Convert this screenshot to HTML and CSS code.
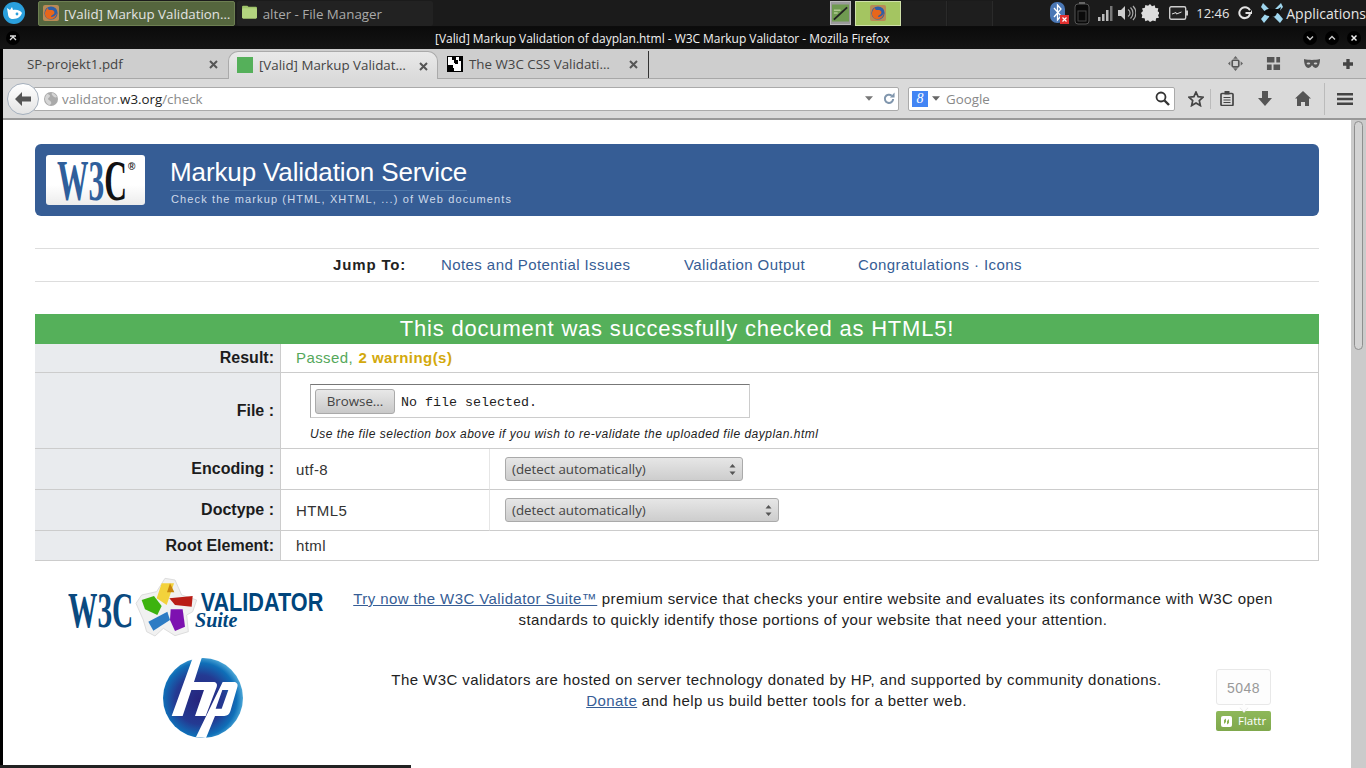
FILE: index.html
```html
<!DOCTYPE html>
<html lang="en">
<head>
<meta charset="utf-8">
<title>[Valid] Markup Validation of dayplan.html - W3C Markup Validator</title>
<link rel="stylesheet" href="styles.css">
</head>
<body>
<div class="panel">
  <svg class="panel-logo" viewBox="0 0 22 22"><circle cx="11" cy="11" r="11" fill="#2a9fdc"/><path d="M4 6l3 2 2-3 1 3c4-1 8 1 9 3-1 3-4 6-9 6-3 0-5-2-5-5z" fill="#fff"/><circle cx="14" cy="12" r="1.4" fill="#2a9fdc"/></svg>
  <div class="task task-active">
    <svg class="ff-icon" viewBox="0 0 16 16"><rect width="16" height="16" rx="2" fill="#b98a55"/><circle cx="8" cy="8" r="6.6" fill="#2d5fa8"/><path d="M3 12c-2-3-1-7 2-9 0 2 1 2 3 2 3 0 4 2 3 4-1 1-3 1-3 3 2 0 4-1 6-4-1 4-3 6-6 6-2 0-4 0-5-2z" fill="#e8661c"/></svg>
    <span class="task-text">[Valid] Markup Validation…</span>
  </div>
  <div class="task">
    <svg class="folder-icon" viewBox="0 0 16 16"><path d="M1 3.5a1 1 0 011-1h4l1 1h7a1 1 0 011 1v9a1 1 0 01-1 1H2a1 1 0 01-1-1z" fill="#9fc46a"/><rect x="1" y="5" width="14" height="9.5" rx="1" fill="#b3d47f"/></svg>
    <span class="task-text task-dim">alter - File Manager</span>
  </div>
  <div class="pager">
    <div class="pager-thumb"><svg viewBox="0 0 18 18"><rect width="18" height="18" fill="#6f9a50"/><path d="M2 16L16 3" stroke="#222" stroke-width="2"/><path d="M2 6h7M2 9h4" stroke="#d8e8b8"/></svg></div>
    <div class="pager-active"><svg class="ff-icon" viewBox="0 0 16 16"><rect width="16" height="16" rx="2" fill="#b98a55"/><circle cx="8" cy="8" r="6.6" fill="#2d5fa8"/><path d="M3 12c-2-3-1-7 2-9 0 2 1 2 3 2 3 0 4 2 3 4-1 1-3 1-3 3 2 0 4-1 6-4-1 4-3 6-6 6-2 0-4 0-5-2z" fill="#e8661c"/></svg></div>
    <div class="pager-slot"></div>
    <div class="pager-slot"></div>
  </div>
  <div class="tray">
    <svg class="t-bt" viewBox="0 0 19 22"><rect x="0" y="0" width="15" height="21" rx="7" fill="#4a77b5"/><path d="M4 6l7 8-3.5 4V3L11 7l-7 8" fill="none" stroke="#fff" stroke-width="1.3"/><rect x="10" y="13" width="9" height="9" fill="#e03030"/><path d="M12.5 15.5l4 4m0-4l-4 4" stroke="#fff" stroke-width="1.2"/></svg>
    <svg class="t-batt" viewBox="0 0 16 23"><rect x="1" y="2" width="14" height="20" rx="3" fill="#0a0a0a" stroke="#555"/><rect x="5" y="0" width="6" height="2" fill="#666"/><rect x="4" y="9" width="8" height="10" fill="none" stroke="#444"/></svg>
    <svg class="t-sig" viewBox="0 0 15 15"><rect x="0" y="11" width="2.5" height="4" fill="#bbb"/><rect x="4" y="8" width="2.5" height="7" fill="#bbb"/><rect x="8" y="4" width="2.5" height="11" fill="#bbb"/><rect x="12" y="0" width="2.5" height="15" fill="#777"/></svg>
    <svg class="t-vol" viewBox="0 0 18 16"><path d="M0 5h3l4-4v14l-4-4H0z" fill="#ccc"/><path d="M10 4.5a4 4 0 010 7M12.5 2.500a7.500 7.500 0 010 11M15 1a10 10 0 010 14" fill="none" stroke="#aaa" stroke-width="1.200"/></svg>
    <svg class="t-gear" viewBox="0 0 18 18"><path d="M9 0l2 2.200 2.700-1 .7 2.800 2.900.3-.6 2.900 2.300 1.800L17 11l1 2.700-2.900.6-.5 2.900-2.800-.6L9 18l-2-1.800-2.700 1-.7-2.900-2.900-.3.600-2.800L0 9l2-1.900L1 4.400l2.900-.6.400-2.900 2.800.8z" fill="#ddd"/></svg>
    <svg class="t-power" viewBox="0 0 19 14"><rect x=".7" y=".7" width="16" height="12.600" rx="1.500" fill="#222" stroke="#ccc" stroke-width="1.400"/><rect x="17" y="4.500" width="2" height="5" fill="#ccc"/><path d="M3 8l4-1.500.5 1.500 5-2" stroke="#ddd" fill="none"/></svg>
    <span class="clock">12:46</span>
    <svg class="t-exit" viewBox="0 0 14 14"><path d="M12 4.200A5.500 5.500 0 102 9.500a5.500 5.500 0 0010-1.500" fill="none" stroke="#e4e4e4" stroke-width="2"/><path d="M7.500 7H14V4.500" fill="none" stroke="#e4e4e4" stroke-width="1.800"/></svg>
    <svg class="t-xfce" viewBox="0 0 22 22"><path d="M2 1l6 6h6l6-6 2 4-5 6 5 6-3 4-6-6H8l-5 6-3-4 5-6-5-6z" fill="#9fd6ee"/><path d="M2 10c3-3 7-4 9-3h6l3-2-1 4 1 3-4-1c-1 3-3 4-5 4l-2 2-1-3c-2 0-4-1-6-4z" fill="#0e0e0e"/></svg>
    <span class="apps">Applications</span>
  </div>
</div>

<div class="window">
  <div class="titlebar">
    <span class="wbtn wbtn-menu"><svg viewBox="0 0 10 10"><path d="M2 3h6M2 7l3-3 3 3" fill="none" stroke="#ddd" stroke-width="1.300"/></svg></span>
    <span class="title">[Valid] Markup Validation of dayplan.html - W3C Markup Validator - Mozilla Firefox</span>
    <div class="wbtns">
      <span class="wbtn"><svg viewBox="0 0 10 10"><path d="M2 3.500l3 3 3-3" fill="none" stroke="#ccc" stroke-width="1.400"/></svg></span>
      <span class="wbtn"><svg viewBox="0 0 10 10"><path d="M2 6.500l3-3 3 3" fill="none" stroke="#ccc" stroke-width="1.400"/></svg></span>
      <span class="wbtn"><svg viewBox="0 0 10 10"><path d="M2.500 2.500l5 5m0-5l-5 5" fill="none" stroke="#eee" stroke-width="1.500"/></svg></span>
    </div>
  </div>

  <div class="tabbar">
    <div class="tab tab-first"><span class="tab-label">SP-projekt1.pdf</span><svg class="tab-x" viewBox="0 0 9 9"><path d="M1 1l7 7m0-7L1 8" stroke="#555" stroke-width="2"/></svg></div>
    <div class="tab tab-current"><span class="fav fav-green"></span><span class="tab-label">[Valid] Markup Validat…</span><svg class="tab-x" viewBox="0 0 9 9"><path d="M1 1l7 7m0-7L1 8" stroke="#555" stroke-width="2"/></svg></div>
    <div class="tab tab-third">
      <svg class="fav" viewBox="0 0 16 16"><rect width="16" height="16" fill="#000"/><path d="M1 1h4v3h2v3h4V4h-2V1h3v4h2v10h-7v-3H6V9H1z" fill="#fff"/><rect x="8" y="5" width="3" height="3" fill="#000"/><rect x="3" y="10" width="3" height="5" fill="#000"/></svg>
      <span class="tab-label">The W3C CSS Validati…</span><svg class="tab-x" viewBox="0 0 9 9"><path d="M1 1l7 7m0-7L1 8" stroke="#555" stroke-width="2"/></svg>
    </div>
    <div class="tabtools">
      <svg viewBox="0 0 16 16"><path d="M8 0l2.500 3h-5zM8 16l-2.500-3h5zM0 8l2.500-2.500v5zM16 8l-2.500 2.500v-5z" fill="#666"/><rect x="4.500" y="4.500" width="7" height="7" rx="1" fill="none" stroke="#555" stroke-width="1.800"/></svg>
      <svg viewBox="0 0 16 16"><path d="M1 1h8v6H1zM11 1h4v6h-4zM1 9h5v6H1zM8 9h7v6H8z" fill="#555"/></svg>
      <svg viewBox="0 0 18 12"><path d="M0 1c3 1 6 1 9 1s6 0 9-1c0 6-2 10-5 10-2 0-3-2-4-3-1 1-2 3-4 3C2 11 0 7 0 1z" fill="#555"/><ellipse cx="5" cy="6" rx="2" ry="1.200" fill="#ccc"/><ellipse cx="13" cy="6" rx="2" ry="1.200" fill="#ccc"/></svg>
      <svg viewBox="0 0 12 12"><path d="M4 0h4v4h4v4H8v4H4V8H0V4h4z" fill="#444"/></svg>
    </div>
  </div>

  <div class="navbar">
    <div class="backbtn"><svg viewBox="0 0 16 14"><path d="M7 0L0 7l7 7V9.500h9v-5H7z" fill="#555"/></svg></div>
    <div class="urlbar">
      <svg class="globe" viewBox="0 0 14 14"><circle cx="7" cy="7" r="7" fill="#aaa"/><path d="M3 2c2 0 3 1 3 2S4 6 4 7s2 1 3 3-1 3-2 3C3 12 1 9 1 7s1-4 2-5zM8 1c2 0 4 2 5 4-2 1-3 0-4-1S7 2 8 1z" fill="#d5d5d5"/></svg>
      <span class="url"><span class="url-dim">validator.</span><span class="url-host">w3.org</span><span class="url-dim">/check</span></span>
      <svg class="drop" viewBox="0 0 9 5"><path d="M0 0h9L4.500 5z" fill="#777"/></svg>
      <svg class="reload" viewBox="0 0 13 13"><path d="M11 7a4.500 4.500 0 11-1.500-3.500" fill="none" stroke="#8096ad" stroke-width="2.200"/><path d="M7.500 5.500H12.500V0z" fill="#8096ad"/></svg>
    </div>
    <div class="searchbar">
      <span class="gicon">8</span>
      <svg class="drop drop-g" viewBox="0 0 9 5"><path d="M0 0h9L4.500 5z" fill="#666"/></svg>
      <span class="search-text">Google</span>
      <svg class="mag" viewBox="0 0 15 15"><circle cx="6" cy="6" r="4.500" fill="none" stroke="#333" stroke-width="1.800"/><path d="M9.500 9.500l4.500 4.500" stroke="#333" stroke-width="2.400"/></svg>
    </div>
    <div class="navtools">
      <svg class="nt-star" viewBox="0 0 16 16"><path d="M8 1l2.100 4.700 5 .5-3.800 3.400 1.100 5L8 12l-4.400 2.600 1.100-5L.9 6.200l5-.5z" fill="none" stroke="#444" stroke-width="1.700"/></svg>
      <span class="nt-sep nt-sep-a"></span>
      <svg class="nt-list" viewBox="0 0 14 15"><rect x="1" y="2.500" width="12" height="12" rx="1" fill="none" stroke="#444" stroke-width="1.700"/><rect x="4.500" y="0" width="5" height="3.500" fill="#444"/><path d="M3.500 6.500h7M3.500 9h7M3.500 11.500h7" stroke="#444" stroke-width="1.200"/></svg>
      <svg class="nt-down" viewBox="0 0 14 15"><path d="M4 0h6v7h4l-7 8-7-8h4z" fill="#555"/></svg>
      <svg class="nt-home" viewBox="0 0 16 15"><path d="M8 0l8 7.500h-2V15h-4v-4H6v4H2V7.500H0z" fill="#555"/></svg>
      <span class="nt-sep nt-sep-b"></span>
      <svg class="nt-menu" viewBox="0 0 16 12"><path d="M0 0h16v2.500H0zM0 4.700h16v2.500H0zM0 9.500h16V12H0z" fill="#444"/></svg>
    </div>
  </div>

  <main class="page">
    <header class="banner">
      <div class="w3c-box">
        <svg viewBox="0 0 99 50" class="w3c-svg"><text x="11" y="45" class="w3c-letters" textLength="70" lengthAdjust="spacingAndGlyphs"><tspan fill="#2f5f9c">W3</tspan><tspan fill="#111">C</tspan></text><text x="82" y="15" class="w3c-reg">®</text></svg>
      </div>
      <div class="banner-text">
        <h1 class="banner-title">Markup Validation Service</h1>
        <p class="banner-sub">Check the markup (HTML, XHTML, ...) of Web documents</p>
      </div>
    </header>

    <nav class="jump">
      <strong class="jump-label">Jump To:</strong>
      <a class="jump-link jl1">Notes and Potential Issues</a>
      <a class="jump-link jl2">Validation Output</a>
      <a class="jump-link jl3">Congratulations · Icons</a>
    </nav>

    <h2 class="status">This document was successfully checked as HTML5!</h2>

    <section class="results">
      <div class="th r-result">Result:</div>
      <div class="td td-wide r-result"><span class="passed">Passed,</span>&nbsp;<strong class="warn">2 warning(s)</strong></div>

      <div class="th r-file">File :</div>
      <div class="td td-wide td-file r-file">
        <div class="filebox"><span class="browse">Browse...</span><span class="nofile">No file selected.</span></div>
        <p class="filenote">Use the file selection box above if you wish to re-validate the uploaded file dayplan.html</p>
      </div>

      <div class="th r-sel">Encoding :</div>
      <div class="td td-val r-sel">utf-8</div>
      <div class="td td-select r-sel"><span class="select sel-a">(detect automatically)<svg viewBox="0 0 7 11"><path d="M3.500 0L6.500 3.500h-6zM3.500 11L.5 7.500h6z" fill="#555"/></svg></span></div>

      <div class="th r-sel">Doctype :</div>
      <div class="td td-val r-sel">HTML5</div>
      <div class="td td-select r-sel"><span class="select sel-b">(detect automatically)<svg viewBox="0 0 7 11"><path d="M3.500 0L6.500 3.500h-6zM3.500 11L.5 7.500h6z" fill="#555"/></svg></span></div>

      <div class="th r-root">Root Element:</div>
      <div class="td td-wide r-root">html</div>
    </section>

    <section class="promo">
      <svg class="suite-logo" viewBox="54 21 768 183">
        <text x="54" y="170" class="s-w3c" textLength="196" lengthAdjust="spacingAndGlyphs">W3C</text>
        <path d="M345 25l30 5 20 45 45 15-12 35-18 10 5 50-40 12-35-22-25 23-25-13-10-35-22-50 17-25 45-10z" fill="#f1f1f1" stroke="#ddd" stroke-width="3"/>
        <path d="M335 40h37l-22 65-30-20z" fill="#f3d23c"/>
        <path d="M360 40l13 27h-22z" fill="#c8860c"/>
        <path d="M358 85l70-7-3 32-50-5z" fill="#b91d16"/>
        <path d="M362 118h36l7 52-30 13-15-33z" fill="#7d11b0"/>
        <path d="M295 155l57-30 8 25-50 32z" fill="#2d7cc4"/>
        <path d="M275 90l37-12 23 30-13 27-37-17z" fill="#3db30e"/>
        <text x="452" y="122" class="s-val" textLength="368" lengthAdjust="spacingAndGlyphs">VALIDATOR</text>
        <text x="435" y="172" class="s-suite" textLength="127" lengthAdjust="spacingAndGlyphs">Suite</text>
      </svg>
      <p class="promo-text"><a class="ul">Try now the W3C Validator Suite™</a> premium service that checks your entire website and evaluates its conformance with W3C open standards to quickly identify those portions of your website that need your attention.</p>
    </section>

    <section class="sponsor">
      <svg class="hp-logo" viewBox="0 0 240 240">
        <defs>
          <radialGradient id="hpg" cx="0.46" cy="0.52" r="0.56"><stop offset="0" stop-color="#26237c"/><stop offset="0.55" stop-color="#243a92"/><stop offset="0.82" stop-color="#0f6fb8"/><stop offset="1" stop-color="#5ab4de"/></radialGradient>
        </defs>
        <circle cx="120" cy="120" r="120" fill="url(#hpg)"/>
        <path d="M89 0h27L93 72h57c10 0 14 6 11 15L128 174H96l27-78H85L59 174H26z" fill="#fff"/>
        <path fill-rule="evenodd" d="M179 72h32c10 0 15 6 12 15l-21 73c-3 9-9 14-18 14h-28l-27 66-30-3zM178 96l-20 56h18l20-56z" fill="#fff"/>
      </svg>
      <p class="sponsor-text">The W3C validators are hosted on server technology donated by HP, and supported by community donations.<br><a class="ul">Donate</a> and help us build better tools for a better web.</p>
      <div class="flattr">
        <div class="flattr-count">5048</div>
        <div class="flattr-btn"><svg viewBox="0 0 11 11"><rect width="11" height="11" rx="2" fill="#fff"/><path d="M3 8V4l2-1.500V6zM8 3v4L6 8.500V5z" fill="#8ab353"/></svg>Flattr</div>
      </div>
    </section>
  </main>
</div>
<div class="statusbar"></div>

<div class="scrollbar"><div class="scrollthumb"></div></div>
</body>
</html>
```

FILE: styles.css
```css
* { box-sizing: border-box; }
html, body { margin: 0; padding: 0; }
body {
  width: 1366px; height: 768px; overflow: hidden; position: relative;
  display: flex; flex-direction: column;
  font-family: "Open Sans", sans-serif; background: #fff;
}
svg { display: block; flex: none; }

/* desktop panel */
.panel { height: 27px; flex: none; background: #1b1b1b; display: flex; align-items: center; padding-left: 3px; border-bottom: 1px solid #0c0c0c; }
.panel-logo { width: 22px; height: 22px; margin-right: 13px; }
.task { width: 198px; height: 25px; margin-right: 2px; display: flex; align-items: center; padding-left: 4px; gap: 5px; background: #222; border-radius: 2px; }
.task-active { background: #55663e; border: 1px solid #6d7f52; }
.ff-icon { width: 16px; height: 16px; }
.folder-icon { width: 17px; height: 17px; margin-top: -4px; }
.task-text { font-size: 13.33px; color: #e3e3e3; white-space: nowrap; padding-top: 2px; }
.task-dim { color: #aaa; margin-left: 0; }
.pager { display: flex; margin-left: 395px; height: 25px; align-items: center; }
.pager-thumb { width: 21px; height: 24px; background: #9a9a9a; border: 1px solid #bbb; padding: 2px 1px; margin-right: 4px; }
.pager-thumb svg { width: 17px; height: 18px; }
.pager-active { width: 46px; height: 25px; background: #a4c561; border: 1px solid #cfe0a8; display: flex; align-items: center; justify-content: center; }
.pager-slot { width: 45px; height: 25px; border-right: 1px solid #2a2a2a; background: #1e1e1e; margin-left: 1px; }
.tray { display: flex; align-items: center; margin-left: 57px; flex: 1; height: 25px; }
.t-bt { width: 19px; height: 22px; }
.t-batt { width: 16px; height: 23px; margin-left: 5px; }
.t-sig { width: 15px; height: 15px; margin-left: 8px; }
.t-vol { width: 18px; height: 16px; margin-left: 5px; }
.t-gear { width: 18px; height: 18px; margin-left: 5px; }
.t-power { width: 19px; height: 14px; margin-left: 10px; }
.clock { font-size: 13px; color: #e5e5e5; margin-left: 8px; width: 35px; }
.t-exit { width: 14px; height: 14px; margin-left: 7px; }
.t-xfce { width: 22px; height: 22px; margin-left: 9px; }
.apps { font-size: 14px; color: #e5e5e5; margin-left: 3px; white-space: nowrap; }

/* window */
.window { flex: 1; min-height: 0; display: flex; flex-direction: column; border-left: 3px solid #000; background: #fff; }
.titlebar { height: 22px; flex: none; background: linear-gradient(#0b0b0b, #141414); display: flex; align-items: center; position: relative; padding: 0 2px 0 3px; margin-left: -3px; }
.title { position: absolute; left: 435px; width: 460px; font-size: 12px; letter-spacing: -.04px; color: #f2f2f2; white-space: nowrap; }
.wbtn { width: 14px; height: 14px; border-radius: 50%; background: #000; display: flex; align-items: center; justify-content: center; }
.wbtn svg { width: 10px; height: 10px; }
.wbtn-menu { margin-left: 3px; }
.wbtns { margin-left: auto; display: flex; gap: 8px; padding-right: 3px; }

.tabbar { height: 30px; flex: none; background: #cecece; display: flex; align-items: flex-end; border-bottom: 1px solid #a8a8a8; position: relative; }
.tab { height: 27px; display: flex; align-items: center; position: relative; padding-bottom: 2px; }
.tab-label { font-size: 13.33px; color: #444; white-space: nowrap; }
.tab-x { width: 9px; height: 9px; position: absolute; top: 9px; }
.tab-first { width: 225px; padding-left: 24px; }
.tab-first .tab-x { left: 206px; }
.tab-current { width: 210px; height: 28px; margin-bottom: -1px; padding-left: 8px; gap: 6px; background: linear-gradient(#e9e9e9, #dadada); border: 1px solid #aaa; border-bottom: 0; border-radius: 10px 10px 0 0; }
.tab-current .tab-x { left: 190px; top: 10px; }
.tab-third { width: 211px; padding-left: 9px; gap: 6px; border-right: 1px solid #333; }
.tab-third .tab-x { left: 191px; }
.fav { width: 16px; height: 16px; flex: none; display: block; }
.fav-green { background: #55b05a; }
.tabtools { position: absolute; left: 1225px; top: 7px; display: flex; align-items: center; }
.tabtools svg { width: 15px; height: 15px; margin-right: 23px; }
.tabtools svg:nth-child(3) { width: 16px; height: 11px; margin-right: 23px; }
.tabtools svg:nth-child(4) { width: 10px; height: 10px; }

.navbar { height: 41px; flex: none; background: #dadada; border-bottom: 2px solid #999; display: flex; align-items: center; padding: 0 0 0 4px; position: relative; }
.backbtn { width: 32px; height: 32px; border-radius: 50%; background: linear-gradient(#fff, #e4e4e4); border: 1px solid #a5b0bd; display: flex; align-items: center; justify-content: center; position: relative; z-index: 1; flex: none; }
.backbtn svg { width: 16px; height: 14px; }
.urlbar { width: 865px; height: 24px; margin-left: -5px; background: #fff; border: 1px solid #aaa; border-radius: 0 2px 2px 0; display: flex; align-items: center; padding-left: 9px; }
.globe { width: 14px; height: 14px; }
.url { font-size: 13.33px; margin-left: 4px; padding-top: 1px; flex: 1; }
.url-dim { color: #8a8a8a; }
.url-host { color: #222; }
.drop { width: 8px; height: 5px; }
.reload { width: 12px; height: 13px; margin: 0 3px 0 10px; }
.searchbar { width: 267px; height: 24px; margin-left: 9px; background: #fff; border: 1px solid #aaa; border-radius: 2px; display: flex; align-items: center; padding: 0 4px 0 3px; }
.gicon { width: 16px; height: 16px; background: #4285f4; color: #fff; font: italic 14px/16px "Liberation Serif", serif; text-align: center; flex: none; }
.drop-g { margin-left: 4px; }
.search-text { font-size: 13.33px; color: #888; margin-left: 6px; padding-top: 1px; flex: 1; }
.mag { width: 15px; height: 15px; }
.navtools { display: flex; align-items: center; margin-left: 13px; }
.nt-star { width: 16px; height: 16px; }
.nt-sep { width: 1px; background: #bbb; flex: none; }
.nt-sep-a { height: 20px; margin: 0 9px 0 6px; }
.nt-list { width: 14px; height: 15px; }
.nt-down { width: 14px; height: 15px; margin-left: 24px; }
.nt-home { width: 16px; height: 15px; margin-left: 23px; }
.nt-sep-b { height: 32px; margin: 0 12px 0 13px; }
.nt-menu { width: 16px; height: 12px; }

/* page */
.page { flex: 1; min-height: 0; padding: 24px 47px 0 32px; font-family: "Liberation Sans", sans-serif; color: #222; overflow: hidden; }
.banner { height: 72px; background: #365d95; border-radius: 6px; display: flex; padding: 11px 0 0 11px; }
.w3c-box { width: 99px; height: 50px; border-radius: 3px; background: linear-gradient(#fff 60%, #ececec); flex: none; }
.w3c-svg { width: 99px; height: 50px; }
.w3c-letters { font: 700 58px "Liberation Serif", serif; }
.w3c-reg { font: 700 10px "Liberation Sans", sans-serif; fill: #222; }
.banner-text { margin-left: 25px; }
.banner-title { margin: 0; width: 297px; font-size: 26px; letter-spacing: -.12px; font-weight: 400; color: #fff; line-height: 35px; border-bottom: 1px solid #4f77a9; height: 36px; white-space: nowrap; }
.banner-sub { margin: 1px 0 0 1px; font-size: 11px; line-height: 14px; letter-spacing: 1.12px; color: #cfdaea; white-space: nowrap; }

.jump { margin-top: 32px; height: 34px; border-top: 1px solid #ddd; border-bottom: 1px solid #ddd; display: flex; align-items: center; padding-bottom: 1px; font-size: 15px; letter-spacing: .42px; white-space: nowrap; }
.jump-label { margin-left: 298px; width: 108px; color: #222; letter-spacing: .85px; }
.jump-link { color: #365d95; }
.jl1 { width: 243px; }
.jl2 { width: 174px; }

.status { margin: 32px 0 0; height: 30px; background: #55b05a; color: #fff; text-align: center; font-size: 22px; font-weight: 400; line-height: 30px; letter-spacing: .8px; white-space: nowrap; }

.results { display: grid; grid-template-columns: 246px 209px 1fr; font-size: 15px; border-right: 1px solid #ccc; }
.th { grid-column: 1; background: #e9ebee; border-right: 1px solid #ccc; border-bottom: 1px solid #ccc; font-weight: 700; text-align: right; display: flex; align-items: center; justify-content: flex-end; padding-right: 6px; font-size: 16px; color: #1c1c1c; letter-spacing: 0; }
.td { border-bottom: 1px solid #ccc; display: flex; align-items: center; padding-left: 15px; font-size: 15px; letter-spacing: .4px; color: #333; }
.td-wide { grid-column: 2 / 4; }
.r-result { height: 29px; padding-bottom: 1px; }
.r-file { height: 76px; }
.r-sel { height: 41px; }
.r-root { height: 30px; }
.passed { color: #55a85b; letter-spacing: .4px; }
.warn { color: #d3a90d; letter-spacing: .45px; margin-left: 1px; }
.td-file { flex-direction: column; align-items: flex-start; padding: 11px 0 0 29px; letter-spacing: 0; }
.filebox { width: 440px; height: 34px; border: 1px solid #ccc; border-top-color: #777; border-left-color: #aaa; display: flex; align-items: center; padding-left: 4px; }
.browse { width: 80px; height: 25px; border: 1px solid #aaa; border-radius: 3px; background: linear-gradient(#e8e8e8, #c9c9c9); font: 13.33px/23px "Open Sans", sans-serif; color: #444; text-align: center; }
.nofile { font: 13.33px "Liberation Mono", monospace; margin: 2px 0 0 6px; color: #222; }
.filenote { margin: 9px 0 0; font-size: 12px; font-style: italic; line-height: 14px; color: #222; letter-spacing: .49px; white-space: nowrap; }
.td-val { grid-column: 2; border-right: 1px solid #e6e6e6; }
.td-select { grid-column: 3; letter-spacing: 0; }
.select { height: 24px; display: flex; align-items: center; justify-content: space-between; padding: 0 6px; border: 1px solid #aaa; border-radius: 3px; background: linear-gradient(#e6e6e6, #cdcdcd); font: 13.33px "Open Sans", sans-serif; color: #444; }
.select svg { width: 7px; height: 11px; }
.sel-a { width: 238px; }
.sel-b { width: 274px; }

.promo { display: flex; margin-top: 16px; align-items: flex-start; }
.suite-logo { width: 256px; height: 61px; margin-left: 33px; }
.s-w3c { font: 700 150px "Liberation Serif", serif; fill: #0a4a80; }
.s-val { font: 700 75px "Liberation Sans", sans-serif; fill: #00457c; }
.s-suite { font: italic 700 62px "Liberation Serif", serif; fill: #00457c; }
.promo-text { margin: 11px 0 0 19px; width: 940px; text-align: center; font-size: 15px; line-height: 21px; letter-spacing: .41px; color: #222; }
.ul { color: #365d95; text-decoration: underline; }

.sponsor { display: flex; margin-top: 20px; align-items: flex-start; }
.hp-logo { width: 80px; height: 80px; margin-left: 128px; }
.sponsor-text { margin: 11px 0 0 139px; width: 789px; text-align: center; font-size: 15px; line-height: 21px; letter-spacing: .43px; color: #222; }
.flattr { margin: 11px 0 0 45px; width: 55px; }
.flattr-count { height: 36px; border: 1px solid #e8e8e8; border-radius: 3px; background: #fdfdfd; color: #999; font-size: 14px; line-height: 36px; text-align: center; letter-spacing: .5px; position: relative; }
.flattr-count::after { content: ""; position: absolute; left: 23px; top: 34px; width: 7px; height: 7px; background: #fdfdfd; border-right: 1px solid #e8e8e8; border-bottom: 1px solid #e8e8e8; transform: rotate(45deg) scale(.8); }
.flattr-btn { margin-top: 6px; height: 20px; border-radius: 2px; background: linear-gradient(#8eb85a, #7fa84c); color: #fff; font: 11.5px/20px "Open Sans", sans-serif; display: flex; align-items: center; padding-left: 5px; gap: 6px; }
.flattr-btn svg { width: 11px; height: 11px; }

.statusbar { width: 411px; height: 3px; flex: none; background: #222; }

.scrollbar { position: absolute; left: 1351px; top: 120px; width: 15px; height: 648px; background: #cbcbcb; padding: 1px 3px; }
.scrollthumb { width: 9px; height: 229px; background: #d3d3d3; border: 1px solid #8f8f8f; border-radius: 5px; }
```
